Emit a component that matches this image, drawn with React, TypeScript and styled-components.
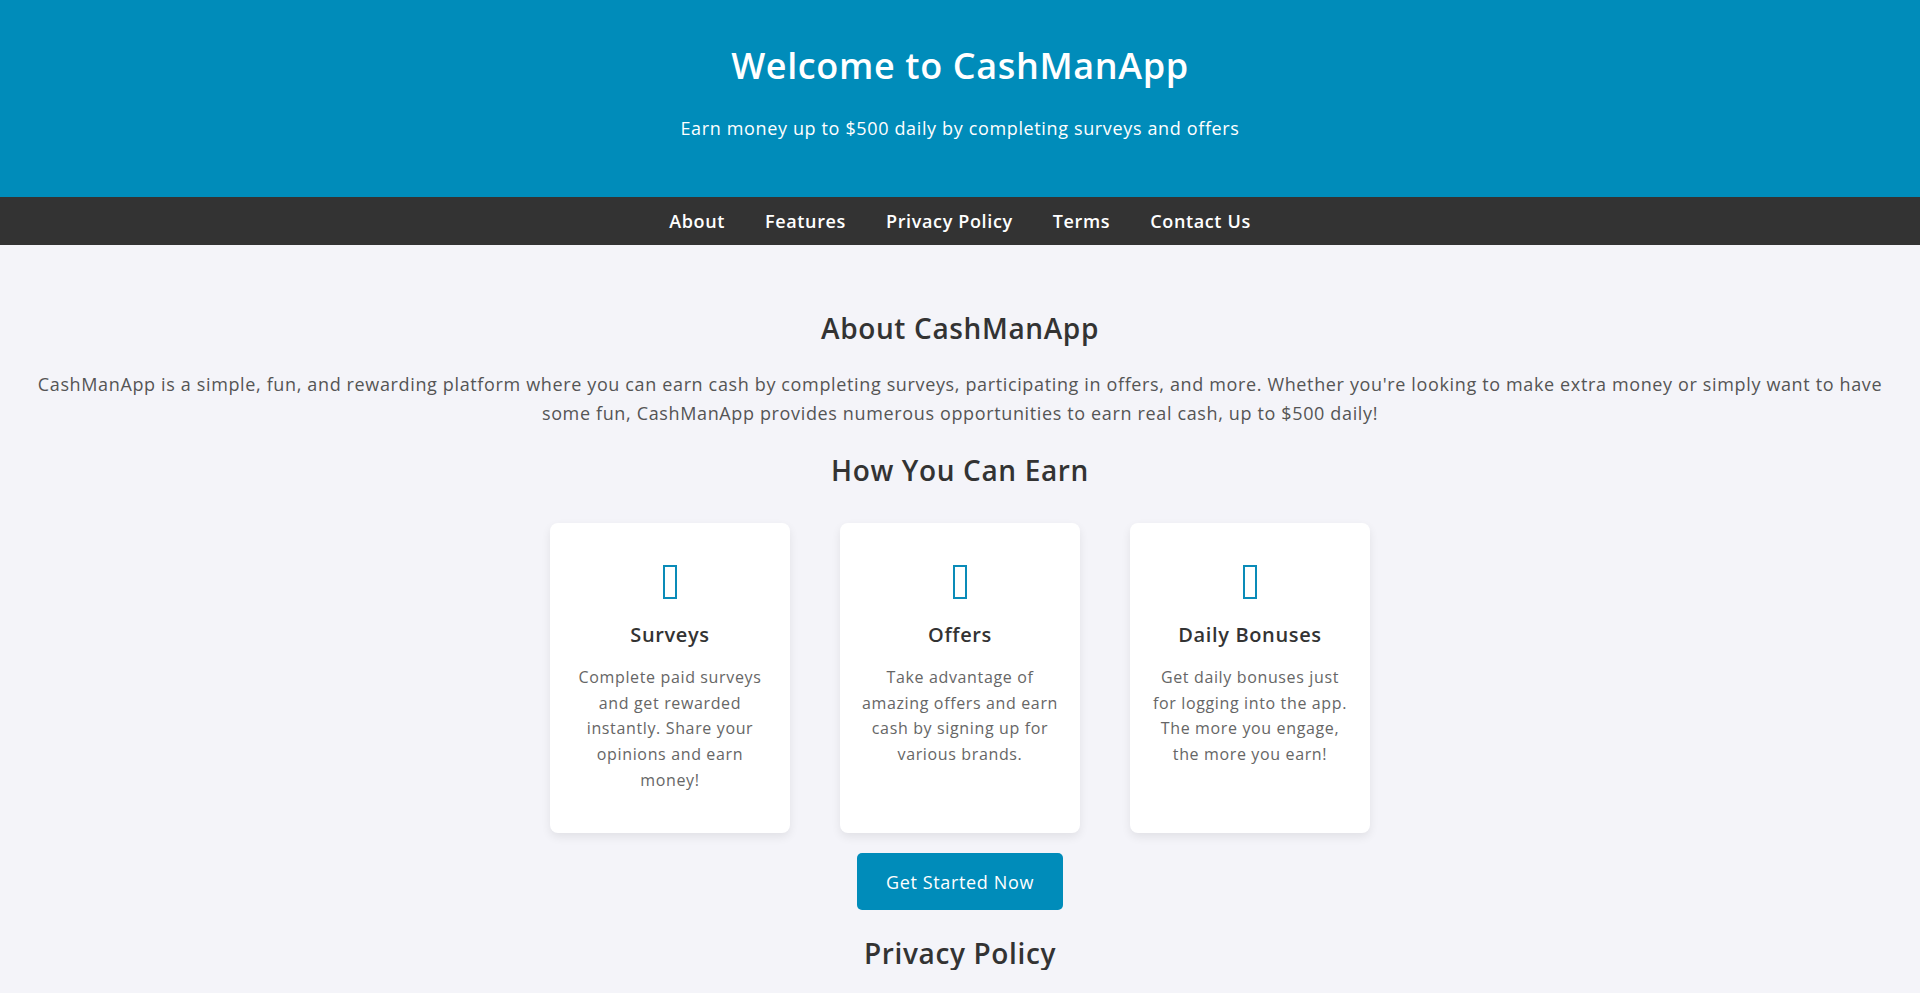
import React from 'react';
import styled, { createGlobalStyle } from 'styled-components';

const GlobalStyle = createGlobalStyle`
  * {
    box-sizing: border-box;
  }
  body {
    margin: 0;
    padding: 0;
    background: #f4f4f9;
    color: #333;
    font-family: 'Open Sans', 'Noto Sans', Arial, sans-serif;
    letter-spacing: 0.04em;
  }
`;

const Header = styled.header`
  background: #008cba;
  color: #fff;
  text-align: center;
  height: 197px;
  padding-top: 43px;
`;

const Title = styled.h1`
  margin: 0;
  font-size: 36px;
  font-weight: 600;
  line-height: 46px;
`;

const Tagline = styled.p`
  margin: 25px 0 0;
  font-size: 18px;
  line-height: 28px;
`;

const Nav = styled.nav`
  background: #333;
  height: 48px;
  display: flex;
  justify-content: center;
  align-items: center;
`;

const NavLink = styled.a`
  color: #fff;
  text-decoration: none;
  font-size: 18px;
  font-weight: 600;
  padding: 0 20px;
`;

const Main = styled.main`
  padding: 66px 20px 0;
  text-align: center;
`;

const SectionTitle = styled.h2`
  margin: 0;
  font-size: 28px;
  line-height: 34px;
  font-weight: 600;
  color: #333;
`;

const Lead = styled.p`
  margin: 25px 0 25px;
  font-size: 18px;
  line-height: 29px;
  color: #555;
`;

const Cards = styled.div`
  display: flex;
  justify-content: center;
  gap: 50px;
  margin-top: 36px;
`;

const Card = styled.div`
  width: 240px;
  height: 310px;
  background: #fff;
  border-radius: 8px;
  box-shadow: 0 4px 10px rgba(0, 0, 0, 0.08);
  padding: 40px 20px 20px;
  display: flex;
  flex-direction: column;
  align-items: center;
`;

// empty glyph box, the icon font never loads
const IconBox = styled.span`
  display: block;
  width: 14px;
  height: 34px;
  margin-top: 2px;
  border: 2px solid #0a8bb8;
`;

const CardTitle = styled.h3`
  margin: 22px 0 0;
  font-size: 20px;
  line-height: 28px;
  font-weight: 600;
  color: #333;
`;

const CardText = styled.p`
  margin: 16px 0 0;
  font-size: 16px;
  line-height: 25.7px;
  color: #666;
`;

const CtaButton = styled.button`
  margin-top: 20px;
  width: 206px;
  height: 57px;
  border: none;
  border-radius: 5px;
  background: #008cba;
  color: #fff;
  font-family: inherit;
  letter-spacing: inherit;
  font-size: 18px;
  cursor: pointer;
`;

const Bottom = styled(SectionTitle)`
  margin-top: 26px;
`;

const features = [
  {
    title: 'Surveys',
    text: 'Complete paid surveys and get rewarded instantly. Share your opinions and earn money!',
  },
  {
    title: 'Offers',
    text: 'Take advantage of amazing offers and earn cash by signing up for various brands.',
  },
  {
    title: 'Daily Bonuses',
    text: 'Get daily bonuses just for logging into the app. The more you engage, the more you earn!',
  },
];

const App: React.FC = () => {
  return (
    <>
      <GlobalStyle />
      <Header>
        <Title>Welcome to CashManApp</Title>
        <Tagline>Earn money up to $500 daily by completing surveys and offers</Tagline>
      </Header>
      <Nav>
        <NavLink href="#about">About</NavLink>
        <NavLink href="#features">Features</NavLink>
        <NavLink href="#privacy">Privacy Policy</NavLink>
        <NavLink href="#terms">Terms</NavLink>
        <NavLink href="#contact">Contact Us</NavLink>
      </Nav>
      <Main>
        <SectionTitle id="about">About CashManApp</SectionTitle>
        <Lead>
          CashManApp is a simple, fun, and rewarding platform where you can earn cash by completing
          surveys, participating in offers, and more. Whether you're looking to make extra money or
          simply want to have some fun, CashManApp provides numerous opportunities to earn real cash,
          up to $500 daily!
        </Lead>
        <SectionTitle id="features">How You Can Earn</SectionTitle>
        <Cards>
          {features.map((f) => (
            <Card key={f.title}>
              <IconBox />
              <CardTitle>{f.title}</CardTitle>
              <CardText>{f.text}</CardText>
            </Card>
          ))}
        </Cards>
        <CtaButton>Get Started Now</CtaButton>
        <Bottom id="privacy">Privacy Policy</Bottom>
      </Main>
    </>
  );
};

export default App;
